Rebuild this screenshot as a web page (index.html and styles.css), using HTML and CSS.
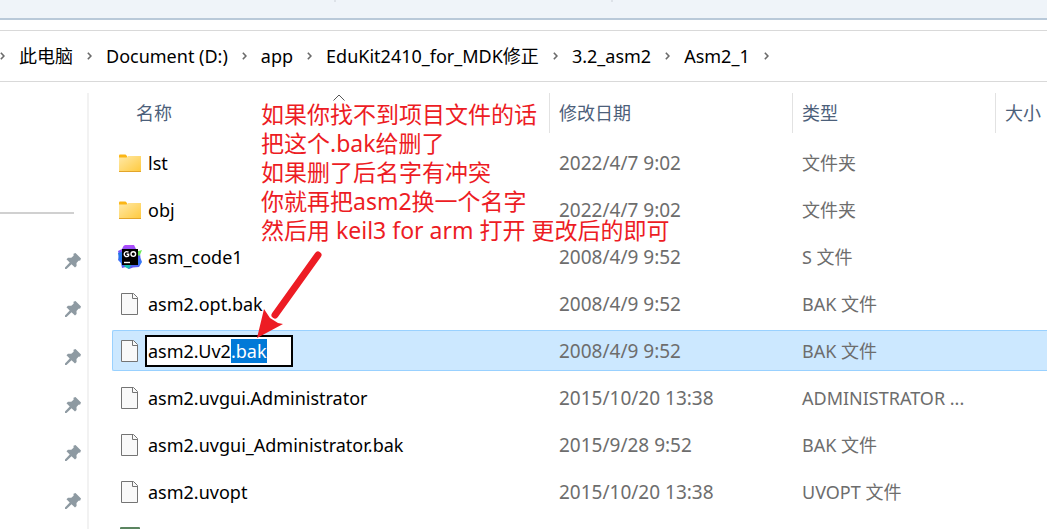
FILE: index.html
```
<!DOCTYPE html>
<html lang="zh-CN">
<head>
<meta charset="utf-8">
<title>Asm2_1</title>
<link rel="stylesheet" href="styles.css">
</head>
<body>
<svg class="defs" aria-hidden="true">
  <defs>
    <linearGradient id="folder-fill" x1="0" y1="0" x2="1" y2="1">
      <stop offset="0" stop-color="#ffe9a8"/>
      <stop offset="1" stop-color="#ffca3e"/>
    </linearGradient>
    <linearGradient id="go-fill" x1="0" y1="0" x2="0" y2="1">
      <stop offset="0" stop-color="#b44cfa"/>
      <stop offset=".45" stop-color="#5a5cf5"/>
      <stop offset=".75" stop-color="#2f7cf6"/>
      <stop offset="1" stop-color="#7a4ff0"/>
    </linearGradient>
    <symbol id="chevron" viewBox="0 0 6 10"><path d="M1 1l3.700 4L1 9" fill="none" stroke="#6b6b6b" stroke-width="1.900"/></symbol>
    <symbol id="folder" viewBox="0 0 24 24">
      <path d="M1 4.500q0-1 1-1h5.500l1.500 1.500v3H1z" fill="#fbb616"/>
      <path d="M1 6.500h7.500l1.500-1.500h13v15.500H1z" fill="url(#folder-fill)"/>
      <path d="M1 20.500h22" stroke="#e3a52a"/>
    </symbol>
    <symbol id="doc" viewBox="0 0 24 24">
      <path d="M3.500 1.500h12l4 4v17h-16z" fill="#f9f9f9" stroke="#747474"/>
      <path d="M14.500 2v4.500H19" fill="none" stroke="#747474"/>
    </symbol>
    <symbol id="go" viewBox="0 0 24 24">
      <path d="M5.500 1L7 0h9l2 4 2 2 2 2 .5 5 1.500 4-3 5-6 .5-4 1.500-3-2-4 1-1-5-3-3 1-5-1-4 4-2z" fill="url(#go-fill)"/>
      <path d="M19 6.500l5-1.500-2.500 6-2-1z" fill="#6be85a"/>
      <path d="M6 20h7l-2 4-4-2z" fill="#18c0b0"/>
      <path d="M0 8l4-1v9l-3-2z" fill="#2376e8"/>
      <rect x="4" y="4" width="16" height="16" fill="#000"/>
      <path d="M10.500 7.300A2.500 2.500 0 1 0 10.600 10.800V9.300H8.700" fill="none" stroke="#fff" stroke-width="1.400"/>
      <circle cx="15.300" cy="9.100" r="2.300" fill="none" stroke="#fff" stroke-width="1.400"/>
      <path d="M6 17.500h6" stroke="#fff" stroke-width="1.400"/>
    </symbol>
    <symbol id="sheet" viewBox="0 0 24 24"><rect x="2" width="20" height="24" rx="1" fill="#5b8560"/><rect x="4" y="3" width="16" height="18" fill="#fff"/></symbol>
    <symbol id="pin" viewBox="0 0 16 16">
      <path d="M8.500.8L10.500 0 16 5.500l-.8 2-1.700.2-2 2.300.1 3-1.600 1.600-3.500-3.400L1.500 16H0v-1.500l4.700-4.900L1.500 6.200 3 4.700l3.300.1 2.300-2z" fill="#8e9aa2"/>
    </symbol>
  </defs>
</svg>

<div class="window">
  <div class="ribbon"><span class="tick"></span><span class="tick"></span></div>
  <nav class="address" aria-label="路径">
    <svg class="chevron"><use href="#chevron"/></svg>
    <button class="crumb">此电脑</button>
    <svg class="chevron"><use href="#chevron"/></svg>
    <button class="crumb">Document (D:)</button>
    <svg class="chevron"><use href="#chevron"/></svg>
    <button class="crumb">app</button>
    <svg class="chevron"><use href="#chevron"/></svg>
    <button class="crumb">EduKit2410_for_MDK修正</button>
    <svg class="chevron"><use href="#chevron"/></svg>
    <button class="crumb">3.2_asm2</button>
    <svg class="chevron"><use href="#chevron"/></svg>
    <button class="crumb">Asm2_1</button>
    <svg class="chevron"><use href="#chevron"/></svg>
  </nav>

  <div class="body">
    <aside class="sidebar">
      <div class="divider"></div>
      <div class="pins">
        <svg class="pin"><use href="#pin"/></svg>
        <svg class="pin"><use href="#pin"/></svg>
        <svg class="pin"><use href="#pin"/></svg>
        <svg class="pin"><use href="#pin"/></svg>
        <svg class="pin"><use href="#pin"/></svg>
        <svg class="pin"><use href="#pin"/></svg>
      </div>
    </aside>

    <main class="files">
      <table class="list">
        <colgroup><col class="col-name"><col class="col-date"><col class="col-type"><col></colgroup>
        <thead>
          <tr>
            <th><button class="head head-name">名称<svg class="sort" viewBox="0 0 12 7"><path d="M.5 6.500L6 1l5.500 5.500" fill="none" stroke="#555"/></svg></button></th>
            <th><button class="head">修改日期</button></th>
            <th><button class="head">类型</button></th>
            <th><button class="head">大小</button></th>
          </tr>
        </thead>
        <tbody>
          <tr><td><div class="name"><svg class="icon"><use href="#folder"/></svg>lst</div></td><td class="date">2022/4/7 9:02</td><td>文件夹</td><td></td></tr>
          <tr><td><div class="name"><svg class="icon"><use href="#folder"/></svg>obj</div></td><td class="date">2022/4/7 9:02</td><td>文件夹</td><td></td></tr>
          <tr><td><div class="name"><svg class="icon"><use href="#go"/></svg>asm_code1</div></td><td class="date">2008/4/9 9:52</td><td>S 文件</td><td></td></tr>
          <tr><td><div class="name"><svg class="icon"><use href="#doc"/></svg>asm2.opt.bak</div></td><td class="date">2008/4/9 9:52</td><td>BAK 文件</td><td></td></tr>
          <tr class="selected"><td><div class="name renaming"><svg class="icon"><use href="#doc"/></svg><input class="rename" type="text" value="asm2.Uv2.bak" aria-label="名称" spellcheck="false"></div></td><td class="date">2008/4/9 9:52</td><td>BAK 文件</td><td></td></tr>
          <tr><td><div class="name"><svg class="icon"><use href="#doc"/></svg>asm2.uvgui.Administrator</div></td><td class="date">2015/10/20 13:38</td><td>ADMINISTRATOR ...</td><td></td></tr>
          <tr><td><div class="name"><svg class="icon"><use href="#doc"/></svg>asm2.uvgui_Administrator.bak</div></td><td class="date">2015/9/28 9:52</td><td>BAK 文件</td><td></td></tr>
          <tr><td><div class="name"><svg class="icon"><use href="#doc"/></svg>asm2.uvopt</div></td><td class="date">2015/10/20 13:38</td><td>UVOPT 文件</td><td></td></tr>
          <tr><td><div class="name"><svg class="icon"><use href="#sheet"/></svg></div></td><td></td><td></td><td></td></tr>
        </tbody>
      </table>
    </main>
  </div>

  <p class="note">如果你找不到项目文件的话<br>把这个.bak给删了<br>如果删了后名字有冲突<br>你就再把asm2换一个名字<br>然后用 keil3 for arm 打开 更改后的即可</p>
  <svg class="arrow" viewBox="0 0 70 90">
    <path d="M63 5L20 65" stroke="#ed1c24" stroke-width="7" stroke-linecap="round"/>
    <path d="M2 88L9 59l6 9 8 5 5 1z" fill="#ed1c24"/>
  </svg>
</div>
<script src="rename.js"></script>
</body>
</html>
```

FILE: styles.css
```
* { box-sizing: border-box; }

body {
  margin: 0;
  background: #fff;
  color: #000;
  font: 18px/24px "Noto Sans", "Noto Sans CJK SC", sans-serif;
}

button {
  padding: 0;
  border: 0;
  background: none;
  color: inherit;
  font: inherit;
}

.defs { position: absolute; width: 0; height: 0; }

.window {
  position: relative;
  display: flex;
  flex-direction: column;
  height: 100vh;
  overflow: hidden;
}

.ribbon {
  display: flex;
  flex: none;
  gap: 275px;
  height: 20px;
  padding-left: 334px;
  background: #eff4f9;
  border-bottom: 2px solid #b9c9d9;
}
.tick { width: 2px; height: 2px; background: #dde2e8; }

.address {
  display: flex;
  flex: none;
  align-items: center;
  gap: 14px;
  height: 52px;
  margin-top: 10px;
  border-top: 1px solid #d9d9d9;
  border-bottom: 1px solid #d9d9d9;
  white-space: nowrap;
}
.chevron { flex: none; width: 5px; height: 10px; }
.crumb { padding-bottom: 1px; }

.body { display: flex; flex: 1; min-height: 0; padding-top: 5px; }

.sidebar {
  flex: none;
  width: 89px;
  margin-top: 6px;
  padding-top: 119px;
  border-right: 2px solid #f2f2f2;
}
.divider { width: 74px; height: 2px; background: #d0d0d0; }
.pins {
  display: flex;
  flex-direction: column;
  align-items: flex-end;
  gap: 32px;
  margin-top: 39px;
  padding-right: 6px;
}
.pin { flex: none; width: 16px; height: 16px; }

.files { flex: 1; min-width: 0; padding-left: 23px; }
.list {
  width: 100%;
  table-layout: fixed;
  border-collapse: separate;
  border-spacing: 0 6px;
  white-space: nowrap;
}
.col-name { width: 437px; }
.col-date { width: 243px; }
.col-type { width: 203px; }

th {
  height: 43px;
  padding: 0;
  vertical-align: top;
  font-weight: 400;
  color: #4c607a;
}
.head {
  position: relative;
  display: block;
  width: 100%;
  height: 40px;
  padding-left: 9px;
  border-left: 1px solid #e2e2e2;
  text-align: left;
}
.head-name { padding-left: 24px; border-left: 0; }
.sort { position: absolute; top: 1px; left: 221px; width: 12px; height: 7px; }

td {
  height: 41px;
  padding: 0 0 0 10px;
  border: solid transparent;
  border-width: 1px 0;
  color: #6d6d6d;
}
td:first-child {
  padding-left: 5px;
  border-left-width: 1px;
  border-radius: 2px 0 0 2px;
  color: #000;
}
.date { font-size: 19px; }
.selected td { background: #cce8ff; border-color: #99d1ff; }

.name { display: flex; align-items: center; gap: 6px; }
.renaming { gap: 3px; }
.icon { flex: none; width: 24px; height: 24px; }
.rename {
  width: 148px;
  height: 32px;
  padding: 0 1px;
  border: 2px solid #000;
  border-radius: 0;
  outline: 0;
  background: #fff;
  color: #000;
  font: inherit;
  caret-color: transparent;
}
.rename::selection { background: rgba(0, 120, 215, .996); color: #fff; }

.note {
  position: absolute;
  top: 100px;
  left: 261px;
  margin: 0;
  color: #ed1c24;
  font-size: 23px;
  line-height: 29px;
  white-space: nowrap;
}
.arrow { position: absolute; top: 250px; left: 255px; width: 70px; height: 90px; }
```

FILE: rename.js
```
// Open the rename box with the extension selected.
const box = document.querySelector(".rename");
box.focus();
box.setSelectionRange(box.value.lastIndexOf("."), box.value.length);
```
